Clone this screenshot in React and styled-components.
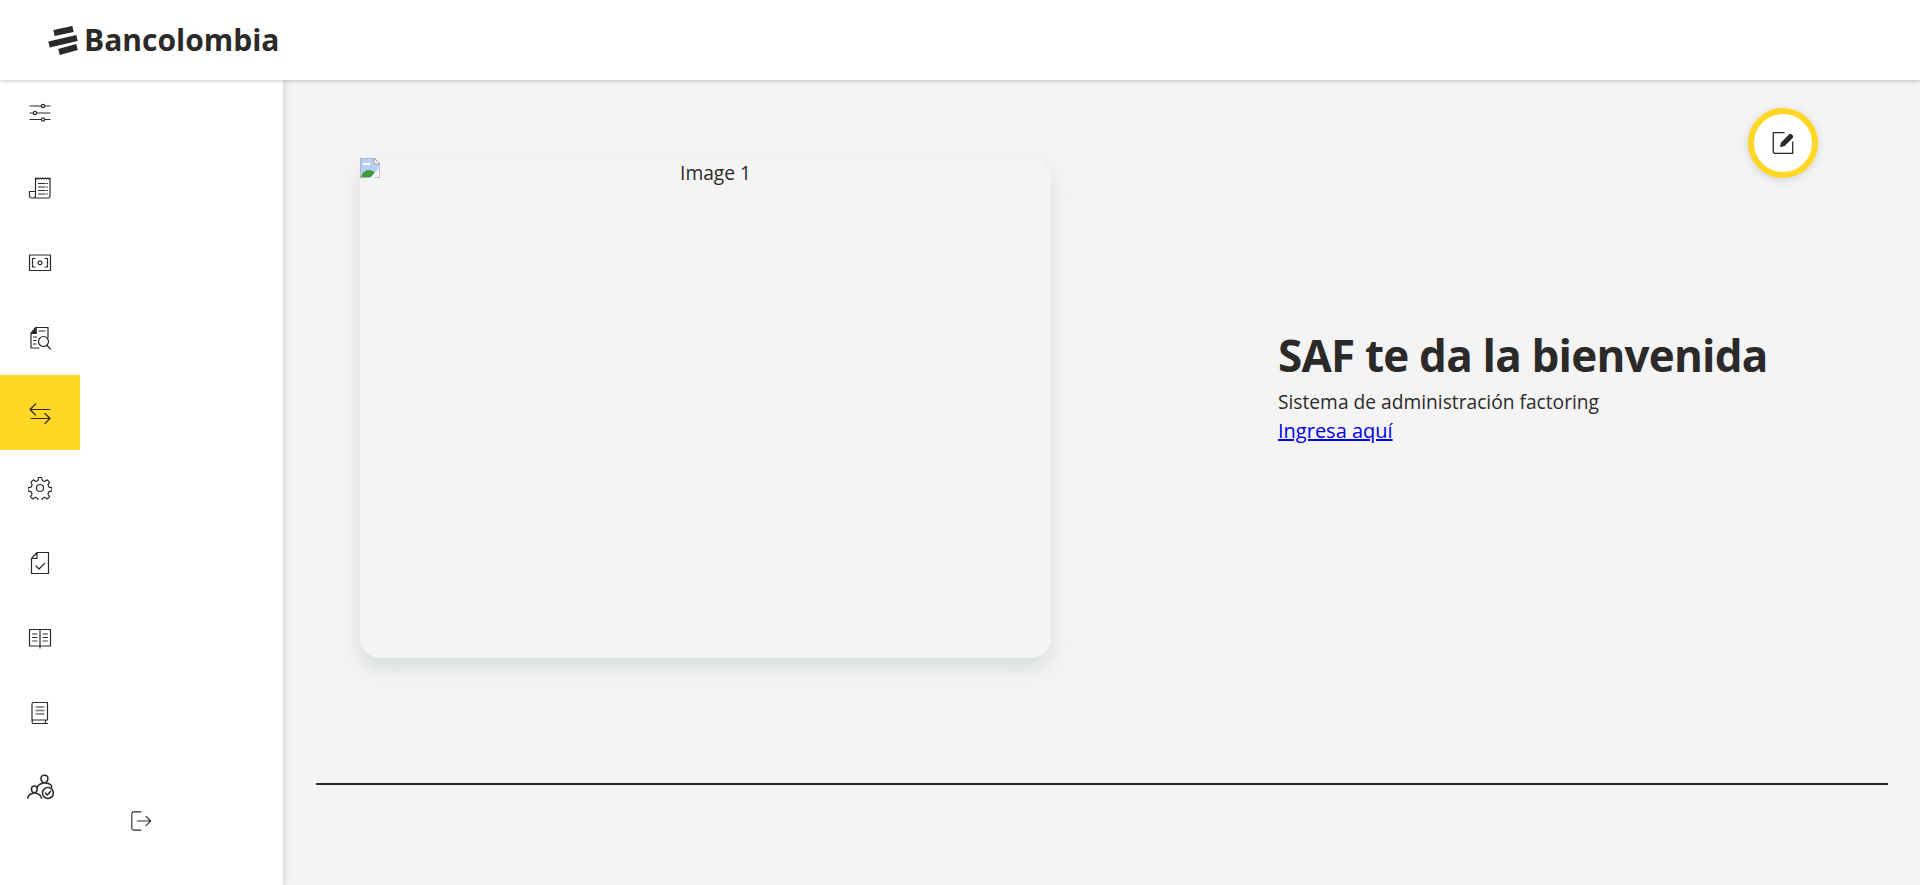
import React from 'react';
import styled, { createGlobalStyle } from 'styled-components';

const ink = '#2c2a29';

const GlobalStyle = createGlobalStyle`
  html, body {
    margin: 0;
    padding: 0;
    height: 100%;
    overflow: hidden;
    background: #f4f4f4;
    font-family: "Open Sans", "Liberation Sans", sans-serif;
    color: ${ink};
  }
`;

const Page = styled.div`
  position: relative;
  display: flex;
  flex-direction: column;
  height: 885px;
`;

const Header = styled.header`
  position: relative;
  z-index: 2;
  flex: 0 0 80px;
  display: flex;
  align-items: center;
  padding-left: 48px;
  background: #fff;
  box-shadow: 0 1px 4px rgba(0, 0, 0, 0.22);
`;

const Logo = styled.div`
  display: flex;
  align-items: center;
  gap: 6px;
`;

const LogoText = styled.span`
  font-family: "Open Sans", sans-serif;
  font-size: 30px;
  font-weight: 700;
  line-height: 1;
  color: ${ink};
`;

const Body = styled.div`
  flex: 1;
  display: flex;
  min-height: 0;
`;

const Sidebar = styled.aside`
  position: relative;
  z-index: 1;
  flex: 0 0 283px;
  background: #fff;
  box-shadow: 1px 0 7px rgba(0, 0, 0, 0.16);
`;

const Nav = styled.nav`
  display: flex;
  flex-direction: column;
  width: 80px;
  margin-top: -5px;
`;

const NavItem = styled.a`
  flex: 0 0 75px;
  display: flex;
  align-items: center;
  justify-content: center;
  background: ${(p) => (p.$active ? '#ffd724' : 'transparent')};
`;

const Logout = styled.a`
  display: block;
  width: 22px;
  height: 22px;
  margin: -15px 0 0 130px;
`;

const Main = styled.main`
  flex: 1;
  min-width: 0;
  padding: 78px 32px 0 33px;
  background: #f4f4f4;
`;

const Hero = styled.section`
  display: flex;
  align-items: center;
  height: 500px;
  padding-left: 44px;
`;

const ImageCard = styled.div`
  flex: 0 0 691px;
  height: 500px;
  display: flex;
  align-items: flex-start;
  border-radius: 20px;
  background: #f4f4f4;
  box-shadow: 0 10px 20px rgba(120, 135, 135, 0.22);
`;

const BrokenImage = styled.svg`
  flex: 0 0 20px;
`;

const AltText = styled.span`
  flex: 1;
  text-align: center;
  font-size: 19.2px;
  line-height: 30px;
`;

const Intro = styled.div`
  margin: 0 0 48px 227px;
`;

const Title = styled.h1`
  margin: 0;
  font-size: 44px;
  line-height: 64px;
  font-weight: 700;
  letter-spacing: -0.8px;
  color: ${ink};
  white-space: nowrap;
`;

const Subtitle = styled.p`
  margin: 0;
  font-size: 19.2px;
  line-height: 29px;
`;

const Link = styled.a`
  font-size: 20px;
  line-height: 29px;
  color: #0000ee;
  text-decoration: underline;
`;

const Divider = styled.hr`
  margin: 125px 0 0;
  border: 0;
  height: 2px;
  background: ${ink};
`;

const EditButton = styled.button`
  position: absolute;
  top: 108px;
  left: 1748px;
  z-index: 3;
  width: 70px;
  height: 70px;
  padding: 0;
  display: flex;
  align-items: center;
  justify-content: center;
  border: 6px solid #ffd724;
  border-radius: 50%;
  background: #fff;
  box-shadow: 0 2px 10px rgba(0, 0, 0, 0.14);
`;

const Icon = ({ size = 24, box = 24, children }) => (
  <svg
    width={size}
    height={size}
    viewBox={`0 0 ${box} ${box}`}
    fill="none"
    stroke={ink}
    strokeWidth="1.2"
    strokeLinecap="round"
    strokeLinejoin="round"
  >
    {children}
  </svg>
);

const icons = [
  {
    draw: (
      <>
        <path d="M2 5h11.500M16.500 5H22M2 12h3.500M8.500 12H22M2 18.500h11.500M16.500 18.500H22" />
        <circle cx="15" cy="5" r="1.600" />
        <circle cx="7" cy="12" r="1.600" />
        <circle cx="15" cy="18.500" r="1.600" />
      </>
    ),
  },
  {
    draw: (
      <>
        <path d="M7.500 2v17.500c0 1.200-.8 2.500-2.500 2.500H3.500C2.300 22 1.500 21 1.500 20v-4.500h6M5 22h15.500c.9 0 1.500-.6 1.500-1.500V2l-1.200 1-1.200-1-1.200 1-1.200-1-1.200 1-1.200-1-1.200 1-1.200-1-1.200 1-1.200-1-1.200 1-1.200-1" />
        <path d="M10.500 7.500h6.500M18.800 7.500h.7M10.500 11h6.500M18.800 11h.7M10.500 14.500h6.500M18.800 14.500h.7M10.500 18h6.500M18.800 18h.7" />
      </>
    ),
  },
  {
    draw: (
      <>
        <rect x="1.500" y="4" width="21" height="15.500" />
        <path d="M7 7.500H4.500v8.500H7M17 7.500h2.500v8.500H17" />
        <circle cx="12" cy="11.800" r="1.900" />
      </>
    ),
  },
  {
    draw: (
      <>
        <path d="M8 1.500h12v10M11 22H3V7.500L8 1.500v6H3" />
        <path d="M3 7.500L8 1.500v6z" fill={ink} />
        <path d="M11 5h6M5.500 11h3M5.500 14.500h2.500M5.500 18h2.500" />
        <circle cx="15.500" cy="15.500" r="5" />
        <path d="M19 19.500l3.500 3.500" />
      </>
    ),
  },
  {
    draw: <path d="M2 8.500h20M7.500 3L2 8.500l5.500 5.500M22 17.500H3M17 12.500l5 5-5 5" />,
  },
  {
    draw: (
      <>
        <circle cx="12" cy="12" r="3.500" />
        <path d="M10.300 1.500h3.400l.6 3 2.300 1 2.600-1.700 2.400 2.400-1.700 2.600 1 2.300 3 .6v3.400l-3 .6-1 2.300 1.700 2.600-2.400 2.400-2.600-1.700-2.300 1-.6 3h-3.400l-.6-3-2.300-1-2.600 1.700-2.400-2.400 1.700-2.600-1-2.300-3-.6v-3.400l3-.6 1-2.300L2.900 6.200l2.400-2.400 2.600 1.700 2.300-1z" />
      </>
    ),
  },
  {
    draw: (
      <>
        <path d="M9 1.500h11.500v21h-17V7.500zM9 1.500v6H3.500" />
        <path d="M8 15l3 3 5.500-5.500" />
      </>
    ),
  },
  {
    draw: (
      <>
        <path d="M1.500 3.500h10.500v16.500h-10.500zM12 3.500h10.500v16.500H12zM12 20v2" />
        <path d="M4.500 8h4.500M4.500 11.500h4.500M15 8h4.500M15 11.500h4.500" />
        <path d="M4.500 15h4.500M15 15h4.500" stroke="#888" strokeWidth="1.500" />
      </>
    ),
  },
  {
    draw: (
      <>
        <path d="M4 19V3c0-.8.6-1.500 1.500-1.500h14V19H5.500C4.700 19 4 19.800 4 20.800s.7 1.700 1.500 1.700h14M17.500 19v3.500" />
        <path d="M8 6h8M8 9.500h8M8 13h8" stroke="#777" strokeWidth="1.300" />
      </>
    ),
  },
  {
    size: 27,
    box: 21.3,
    draw: (
      <>
        <path d="M13.500 7c-1.800-.8-2.500-2-2.500-3.500C11 2 12 1 13.700 1s2.800 1 2.800 2.500S15.800 6.200 14 7c2 .3 5.400 .2 5.500 3.500M13.500 7C11.500 7.500 8.500 8 8.300 10.500" />
        <path d="M5.500 15c-1.500-.6-2-1.800-2-3 0-1.500 1-2.500 2.300-2.500S8 10.500 8 12c0 1.300-.6 2.400-2 3 2.500 .3 4.800 1 5.500 4M5.500 15C3 15.500 1 16 .5 19" />
        <circle cx="16.500" cy="15" r="4.300" />
        <path d="M14.500 15l1.500 1.500 2.600-2.800" />
      </>
    ),
  },
];

const App = () => (
  <Page>
    <GlobalStyle />
    <Header>
      <Logo>
        <svg width="30" height="30" viewBox="0 0 30 30" fill="none" stroke={ink} strokeWidth="6">
          <path d="M6 8l19-4" />
          <path d="M1 19.500l28-6.500" />
          <path d="M11 27l18-5" />
        </svg>
        <LogoText>Bancolombia</LogoText>
      </Logo>
    </Header>
    <Body>
      <Sidebar>
        <Nav>
          {icons.map((icon, i) => (
            <NavItem key={i} $active={i === 4}>
              <Icon size={icon.size} box={icon.box}>{icon.draw}</Icon>
            </NavItem>
          ))}
        </Nav>
        <Logout>
          <Icon size={22}>
            <path d="M12 2H4C2.800 2 2 2.800 2 4v16c0 1.200.8 2 2 2h8M8 12h14.500M17.500 7l5 5-5 5" />
          </Icon>
        </Logout>
      </Sidebar>
      <Main>
        <Hero>
          <ImageCard>
            <BrokenImage width="20" height="20" viewBox="0 0 20 20">
              <path d="M0 0h14l6 6v14H0z" fill="#b9d0f5" />
              <path d="M14 0l6 6h-6z" fill="#fff" stroke="#9a9a9a" />
              <path d="M3 5h7v2H3z" fill="#fff" />
              <path d="M1 19c2-8 10-9 14-4l-4 4z" fill="#3f9a35" />
              <path d="M10 20L20 9v11z" fill="#f4f4f4" />
              <path d="M0 0h14M0 0v20h10M20 10v10h-5" fill="none" stroke="#9a9a9a" />
            </BrokenImage>
            <AltText>Image 1</AltText>
          </ImageCard>
          <Intro>
            <Title>SAF te da la bienvenida</Title>
            <Subtitle>Sistema de administración factoring</Subtitle>
            <Link href="#">Ingresa aquí</Link>
          </Intro>
        </Hero>
        <Divider />
      </Main>
    </Body>
    <EditButton>
      <Icon size={26}>
        <path d="M13 2.500H3v17c0 1.200.8 2 2 2h16V11" />
        <path d="M10 15l.8-3.300 7-7c.6-.6 1.500-.6 2.100 0l.4.4c.6.6.6 1.500 0 2.100l-7 7z" fill={ink} />
      </Icon>
    </EditButton>
  </Page>
);

export default App;
